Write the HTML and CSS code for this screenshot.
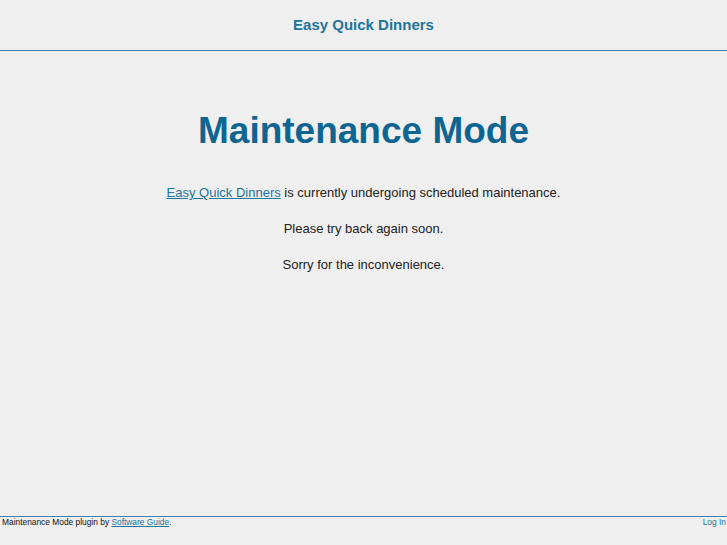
FILE: index.html
```html
<!DOCTYPE html>
<html>
<head>
<meta charset="utf-8">
<link rel="stylesheet" href="styles.css">
</head>
<body>
<div class="page">
  <header class="site-header">
    <div class="site-title">Easy Quick Dinners</div>
  </header>
  <main class="content">
    <h1 class="heading">Maintenance Mode</h1>
    <p class="msg"><a href="#">Easy Quick Dinners</a> is currently undergoing scheduled maintenance.</p>
    <p class="msg">Please try back again soon.</p>
    <p class="msg">Sorry for the inconvenience.</p>
  </main>
  <footer class="site-footer">
    <span class="credit">Maintenance Mode plugin by <a href="#">Software Guide</a>.</span>
    <a class="login" href="#">Log In</a>
  </footer>
</div>
</body>
</html>
```

FILE: styles.css
```css
html, body {
  margin: 0;
  padding: 0;
  background: #efefef;
  font-family: "Liberation Sans", Arial, sans-serif;
}
.page {
  display: flex;
  flex-direction: column;
  height: 545px;
}
.site-header {
  height: 50px;
  border-bottom: 1px solid #3f82a8;
  display: flex;
  align-items: center;
  justify-content: center;
}
.site-title {
  color: #21759b;
  font-weight: bold;
  font-size: 15px;
  padding-bottom: 2px;
}
.content {
  flex: 1;
  text-align: center;
}
.heading {
  margin: 57px 0 31px;
  font-size: 37px;
  line-height: 46px;
  color: #0f6591;
  font-weight: bold;
}
.msg {
  margin: 0 0 20px;
  font-size: 13px;
  line-height: 16px;
  color: #222;
}
.msg a {
  color: #21759b;
}
.site-footer {
  border-top: 1px solid #3f82a8;
  height: 28px;
  display: flex;
  justify-content: space-between;
  align-items: flex-start;
  padding: 0 1px 0 2px;
  font-size: 8.4px;
  line-height: 11px;
}
.credit {
  color: #111;
}
.credit a {
  color: #21759b;
}
.login {
  color: #21759b;
  text-decoration: none;
}
```
